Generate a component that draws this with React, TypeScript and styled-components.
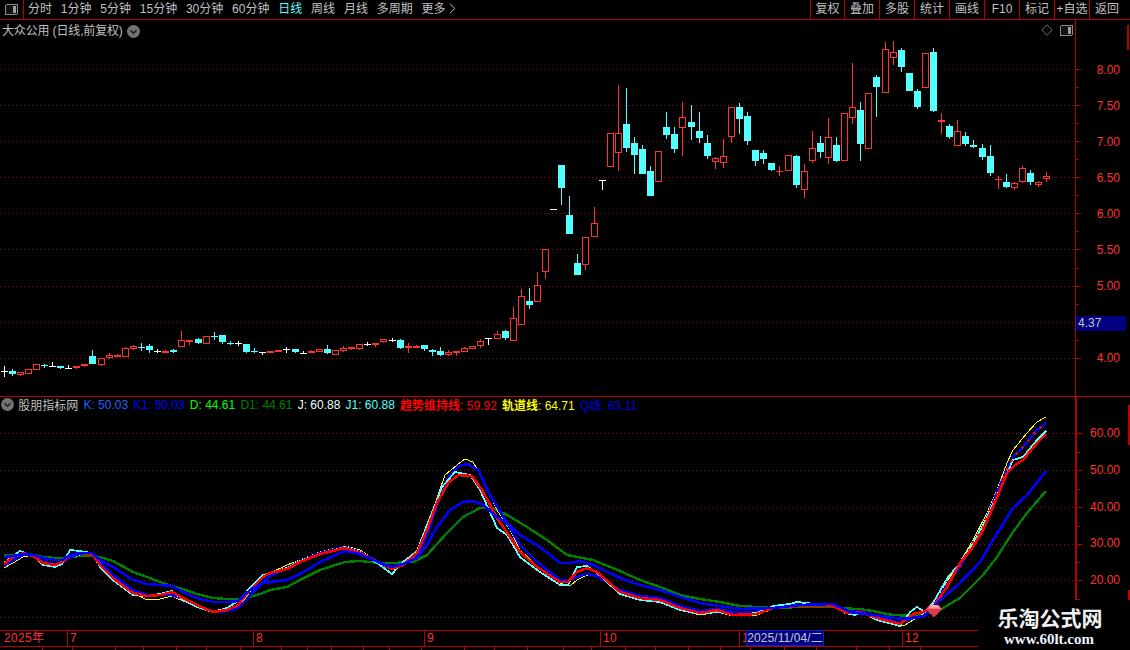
import React from "react";
import styled, { createGlobalStyle } from "styled-components";

const RED_LINE = "#b80000";
const UI_FONT = `"Liberation Sans", "Noto Sans CJK SC", sans-serif`;

const Global = createGlobalStyle`
  html, body { margin: 0; padding: 0; background: #000; overflow: hidden; }
  #root { width: 1130px; height: 650px; overflow: hidden; }
`;

const Page = styled.div`
  position: relative;
  width: 1130px;
  height: 650px;
  display: flex;
  flex-direction: column;
  background: #000;
  color: #c0c0c0;
  font: 12px ${UI_FONT};
  overflow: hidden;
`;

/* ---------- toolbar ---------- */
const Toolbar = styled.div`
  flex: none;
  height: 19px;
  display: flex;
  align-items: stretch;
  border-bottom: 1px solid ${RED_LINE};
`;
const PanelButton = styled.div`
  width: 18px;
  border-right: 1px solid ${RED_LINE};
  display: flex;
  align-items: center;
  padding-left: 5px;
  margin-right: 4px;
`;
const Periods = styled.div`
  flex: 1;
  display: flex;
  align-items: center;
  gap: 8.8px;
`;
const Period = styled.span<{ $active?: boolean }>`
  color: ${(p) => (p.$active ? "#54ffff" : "#c0c0c0")};
  white-space: nowrap;
  line-height: 19px;
`;
const ToolButton = styled.div<{ $w: number }>`
  width: ${(p) => p.$w}px;
  box-sizing: border-box;
  border-left: 1px solid ${RED_LINE};
  padding-right: ${(p) => (p.$w > 35 ? 6 : 0)}px;
  text-align: center;
  line-height: 18px;
  white-space: nowrap;
`;

/* ---------- panes ---------- */
const MainPane = styled.div`
  flex: none;
  height: 377px;
  box-sizing: border-box;
  display: flex;
  border-bottom: 1px solid ${RED_LINE};
`;
const IndicatorPane = styled.div`
  flex: none;
  height: 233px;
  display: flex;
`;
const Surface = styled.div`
  position: relative;
  width: 1075px;
  flex: none;
  svg.plot { display: block; }
`;
const PriceAxis = styled.div<{ $heavy?: boolean; $top: number; $row: number }>`
  position: relative;
  flex: 1;
  border-left: ${(p) => (p.$heavy ? 2 : 1)}px solid ${RED_LINE};
  padding-top: ${(p) => p.$top}px;
  box-sizing: border-box;
  color: #ff3232;
  --row: ${(p) => p.$row}px;
  svg { position: absolute; left: 0; top: 0; }
`;
const AxisLabel = styled.div`
  height: var(--row);
  line-height: var(--row);
  text-align: right;
  padding-right: 10px;
  position: relative;
`;
const PriceBadge = styled.div`
  position: absolute;
  left: 0;
  top: 296px;
  width: 50px;
  height: 15px;
  padding-left: 2px;
  box-sizing: border-box;
  line-height: 15px;
  background: #000080;
  color: #c8c8c8;
`;

/* ---------- overlays on panes ---------- */
const Title = styled.div`
  position: absolute;
  left: 2px;
  top: 2px;
  display: flex;
  align-items: center;
  gap: 4px;
  line-height: 18px;
  letter-spacing: -0.15px;
  color: #c0c0c0;
`;
const CornerTools = styled.div`
  position: absolute;
  right: 2px;
  top: 4px;
  display: flex;
  align-items: center;
  gap: 7px;
`;
const Legend = styled.div`
  position: absolute;
  left: 1px;
  top: 0;
  display: flex;
  align-items: center;
  height: 15px;
  white-space: nowrap;
  gap: 5.2px;
`;
const LegendName = styled.span`
  color: #c0c0c0;
  margin-left: -1px;
`;
const LegendValue = styled.span<{ $color: string }>`
  color: ${(p) => p.$color};
`;
const LegendCjk = styled.span<{ $bold?: boolean }>`
  font-weight: ${(p) => (p.$bold ? 700 : 400)};
`;

/* ---------- time axis ---------- */
const TimeAxis = styled.div`
  position: relative;
  flex: none;
  height: 17px;
  box-sizing: border-box;
  border-top: 1px solid ${RED_LINE};
  border-bottom: 1px solid ${RED_LINE};
  color: #ff3232;
  display: flex;
`;
const TimeCell = styled.div<{ $w: number; $pad: number }>`
  flex: none;
  width: ${(p) => p.$w}px;
  border-right: 1px solid ${RED_LINE};
  box-sizing: border-box;
  line-height: 15px;
  padding-left: ${(p) => p.$pad}px;
  letter-spacing: 0.3px;
  overflow: hidden;
  white-space: nowrap;
  &:last-child { border-right: 0; }
`;
const DateTag = styled.div`
  position: absolute;
  left: 746px;
  top: -1px;
  width: 78px;
  height: 16px;
  box-sizing: border-box;
  background: #000080;
  border: 1px solid #1020c0;
  color: #c8c8c8;
  line-height: 14px;
  text-align: center;
  white-space: nowrap;
  letter-spacing: 0.1px;
`;
const StatusStrip = styled.div`
  flex: none;
  height: 3px;
  display: flex;
  overflow: hidden;
`;
const StatusCell = styled.div<{ $w: number }>`
  flex: none;
  width: ${(p) => p.$w}px;
  box-sizing: border-box;
  border-right: 1px solid ${RED_LINE};
  height: 3px;
`;

/* ---------- watermark ---------- */
const Watermark = styled.div`
  position: absolute;
  left: 978px;
  top: 600px;
  width: 152px;
  height: 50px;
  background: #000;
  display: flex;
  flex-direction: column;
  align-items: center;
  padding-top: 4px;
  box-sizing: border-box;
`;
const WatermarkName = styled.div`
  color: #f0f0f0;
  font: 700 21px/26px "Noto Sans CJK SC", sans-serif;
  margin-left: -8px;
`;
const WatermarkUrl = styled.div`
  color: #eef2ff;
  font: 700 15px/15px "Liberation Serif", serif;
  margin-top: 2px;
  margin-left: -10px;
`;

/* ---------- small drawings ---------- */
const PanelIcon = () => (
  <svg width="13" height="11" viewBox="0 0 13 11" shapeRendering="crispEdges">
    <rect x="0.5" y="0.5" width="12" height="10" rx="1.5" fill="#111" stroke="#8a8a8a" />
    <rect x="8" y="2" width="3" height="7" fill="#a0a0a0" />
  </svg>
);
const Chevron = () => (
  <svg width="13" height="13" viewBox="0 0 13 13">
    <circle cx="6.5" cy="6.5" r="6.5" fill="#737373" />
    <path d="M3.5 5.2 L6.5 8.2 L9.5 5.2" fill="none" stroke="#1c1c1c" strokeWidth="1.4" />
  </svg>
);
const Diamond = () => (
  <svg width="12" height="12" viewBox="0 0 12 12">
    <path d="M6 .8 L11.2 6 L6 11.2 L.8 6 Z" fill="none" stroke="#6e6e6e" />
  </svg>
);
const MoreArrow = () => (
  <svg width="7" height="11" viewBox="0 0 7 11" style={{ marginLeft: 3, verticalAlign: "-1px" }}>
    <path d="M1 .8 L5.8 5.5 L1 10.2" fill="none" stroke="#c0c0c0" />
  </svg>
);

/* ---------- candle data: [x, wickTop, wickBottom, bodyTop, bodyBottom, kind]
   measured on 3x crops; kind r = hollow red, f = solid red, c = cyan, w = white */
type Kind = "r" | "f" | "c" | "w";
type Row = [number, number, number, number, number, Kind];

const groupA: Row[] = [
  [12,138,170,154,156,"w"],[37,148,170,153,161,"c"],[61,157,170,157,166,"r"],[85,148,163,148,163,"r"],
  [109,133,151,133,151,"r"],[133,131,143,136,138,"c"],[156,127,141,139,141,"w"],[180,139,147,139,144,"c"],
  [204,136,147,145,147,"w"],[229,137,146,137,143,"r"],[253,133,143,133,139,"r"],[277,91,132,108,132,"c"],
  [304,115,140,115,134,"r"],[328,100,118,106,115,"r"],[352,103,110,106,110,"f"],[376,82,110,85,110,"r"],
  [400,76,92,79,86,"r"],[424,70,93,81,83,"c"],[448,72,98,78,90,"c"],[472,88,99,93,95,"w"],
  [496,91,99,94,98,"f"],[520,87,99,90,96,"c"],[544,33,80,61,80,"r"],[568,61,75,61,65,"f"],
  [595,54,71,57,69,"c"],[619,49,71,49,71,"r"],[643,37,60,47,49,"c"],[667,45,71,45,66,"c"],
  [690,63,75,69,71,"c"],[714,63,78,70,72,"w"],[739,72,99,72,96,"c"],[762,84,99,93,95,"c"],
  [786,96,105,97,99,"w"],[811,94,98,94,98,"f"],[835,91,98,91,95,"f"],[858,81,98,88,90,"w"],
  [886,87,98,87,95,"c"],
];
const groupB: Row[] = [
  [9,153,162,159,161,"w"],[34,151,159,153,158,"f"],[58,148,155,148,155,"r"],[82,135,162,147,159,"c"],
  [106,151,164,151,164,"r"],[130,138,155,145,152,"r"],[154,142,152,142,146,"f"],[178,133,152,133,146,"r"],
  [202,126,138,131,133,"w"],[226,130,141,130,136,"r"],[250,118,129,118,125,"r"],[276,114,125,120,122,"w"],
  [301,117,148,120,144,"c"],[325,129,159,138,143,"f"],[349,135,143,139,143,"f"],[373,135,153,135,147,"c"],
  [397,147,168,151,155,"c"],[421,141,168,153,165,"c"],[445,150,167,157,164,"r"],[469,153,167,153,158,"f"],
  [493,141,155,144,155,"r"],[517,139,149,139,146,"r"],[541,117,144,123,137,"r"],[565,114,135,115,117,"w"],
  [592,93,117,103,117,"r"],[616,90,120,94,114,"c"],
];
const groupC: Row[] = [
  [40,681,762,714,783,"r"],[64,627,735,649,735,"r"],[88,624,687,663,675,"c"],[112,576,665,616,665,"r"],
  [136,508,597,508,575,"r"],[159,388,390,388,390,"w"],[184,255,375,255,323,"c"],[208,348,462,405,462,"c"],
  [232,522,585,549,585,"c"],[256,472,570,472,554,"r"],[283,381,470,430,470,"r"],[306,301,330,301,303,"w"],
  [331,160,260,160,260,"r"],[355,15,273,160,218,"r"],[379,24,216,132,204,"c"],[403,171,282,189,225,"c"],
  [427,195,282,207,282,"c"],[451,258,348,273,348,"c"],[475,214,305,214,305,"r"],[499,96,177,141,165,"c"],
  [523,141,219,162,207,"c"],[547,66,228,112,143,"r"],[574,75,180,126,141,"c"],[598,96,189,153,174,"c"],
  [622,165,237,189,228,"c"],[646,231,267,235,245,"r"],[670,177,264,229,248,"r"],[694,82,189,82,170,"r"],
  [718,69,162,81,117,"c"],[742,96,195,108,183,"c"],[766,210,258,210,243,"c"],[790,210,252,219,237,"c"],
  [814,249,273,249,270,"c"],[838,258,288,273,276,"f"],
];
const groupD: Row[] = [
  [25,346,395,346,392,"r"],[49,345,444,348,435,"c"],[73,372,474,393,449,"r"],[97,273,369,325,362,"r"],
  [121,288,354,309,336,"c"],[145,234,372,292,353,"r"],[169,291,366,315,363,"c"],[193,220,362,220,362,"r"],
  [217,69,252,202,233,"r"],[241,186,363,210,312,"c"],[265,160,326,160,326,"r"],[289,105,231,111,141,"c"],
  [316,6,158,28,158,"r"],[340,3,75,37,53,"r"],[364,24,96,30,81,"c"],[388,99,153,99,153,"c"],
  [412,147,207,153,201,"c"],[436,40,143,40,143,"r"],[460,24,216,36,213,"c"],[484,219,282,240,245,"f"],
  [508,252,297,258,291,"c"],[532,240,317,274,317,"r"],[556,276,318,288,312,"c"],[580,300,324,315,320,"c"],
  [607,312,360,324,351,"c"],[631,315,408,348,399,"c"],[655,408,447,417,419,"f"],[679,402,444,426,441,"c"],
  [703,426,450,430,443,"r"],[727,378,429,385,425,"r"],[751,390,435,399,426,"c"],[775,423,441,427,434,"r"],
  [799,396,426,408,418,"r"],
];

const colors: Record<Kind, string> = { r: "#ff3232", f: "#ff3232", c: "#54ffff", w: "#ffffff" };

const Candles = ({ rows, x0, y0 }: { rows: Row[]; x0: number; y0: number }) => (
  <>
    {rows.map(([x, wt, wb, bt, bb, k], i) => {
      const px = Math.floor(x0 + x / 3);
      const top = Math.round(y0 + bt / 3);
      const bot = Math.round(y0 + bb / 3);
      const c = colors[k];
      return (
        <g key={i}>
          <rect x={px} y={Math.round(y0 + wt / 3)} width={1} height={Math.max(1, Math.round((wb - wt) / 3))} fill={c} />
          {k === "r" ? (
            <rect x={px - 3 + 0.5} y={top + 0.5} width={6} height={Math.max(1, bot - top - 1)} fill="#000" stroke={c} />
          ) : (
            <rect x={px - 3} y={top} width={7} height={Math.max(1, bot - top)} fill={c} />
          )}
        </g>
      );
    })}
  </>
);

/* ---------- indicator curves, in page coordinates ---------- */
const Y = "4,568 13,563 23,557 33,555 43,562 55,566 62,564 70,558 80,555 92,553 100,565 113,578 133,593 147,600 160,599 172,596 183,601 197,606 213,612 227,611 238,608 250,592 263,577 270,573 287,565 300,560 320,552 345,546 360,550 380,563 392,570 403,566 417,552 427,530 437,498 445,475 457,465 465,459 473,462 482,478 497,510 510,530 520,550 537,566 560,583 570,586 577,580 587,575 597,575 620,593 640,600 660,602 680,610 700,615 717,612 733,616 757,615 773,609 797,605 833,605 847,613 860,613 877,618 903,626 920,616 933,607 948,580 960,562 973,540 987,513 997,490 1007,463 1013,450 1027,433 1037,422 1046,417";
const C = "4,563 13,556 20,551 33,556 43,565 55,567 62,564 70,550 80,551 92,553 100,567 113,580 133,595 147,596 160,594 172,591 183,600 197,607 213,612 227,608 238,601 250,588 263,575 272,572 287,568 300,561 320,554 345,547 360,552 380,565 392,574 403,562 417,551 427,525 437,500 442,487 455,472 470,475 480,490 497,528 507,535 520,557 537,570 560,585 568,585 577,567 587,566 597,573 620,594 640,600 660,602 680,610 700,614 717,612 735,615 757,613 773,606 790,604 797,602 815,604 833,604 845,613 855,615 862,612 877,620 900,626 910,612 917,607 925,612 933,603 948,577 960,563 973,543 983,525 995,500 1013,460 1023,457 1037,440 1046,431";
const R = "4,564 13,557 23,553 33,556 43,563 55,565 62,562 70,555 80,553 92,554 100,565 113,578 133,593 147,596 160,595 172,592 183,598 197,605 213,612 227,610 238,605 250,590 263,577 270,573 287,569 300,562 320,554 345,548 360,553 380,563 392,569 403,565 417,553 427,530 437,503 448,483 458,475 472,476 482,490 497,518 510,537 520,552 537,567 560,582 568,582 577,572 587,568 597,572 620,592 640,598 660,600 680,608 700,613 717,610 733,615 757,614 773,608 797,606 833,606 847,613 860,612 877,618 900,624 913,614 923,612 933,607 947,587 960,563 973,547 983,530 993,507 1007,473 1015,465 1023,460 1037,443 1046,434";
const Q = "4,566 13,560 23,555 33,555 43,562 55,564 62,563 70,557 80,554 92,554 100,562 113,575 133,590 147,595 160,595 172,595 183,599 197,606 213,612 227,611 238,608 250,596 263,582 270,576 287,568 300,561 320,553 345,547 360,552 380,563 392,567 403,564 417,555 427,535 437,505 448,478 458,466 468,464 478,470 490,495 510,528 520,545 537,562 560,580 568,581 577,577 587,574 597,576 620,590 640,596 660,598 680,606 700,611 717,609 733,612 757,612 773,607 797,605 833,605 847,611 860,611 877,617 900,623 913,618 923,616 933,607 948,583 960,567 973,543 983,527 998,490 1007,470 1013,457 1023,447 1037,430 1046,423";
const Qdots = "960,567 973,543 983,527 998,490 1007,470 1013,457 1023,447 1037,430 1046,423";
const D = "4,557 13,556 23,554 33,555 43,558 55,560 62,560 70,555 80,553 92,553 100,560 113,567 133,580 147,584 160,585 172,586 183,592 197,598 213,602 227,602 238,601 250,590 263,583 270,582 287,580 300,574 320,562 345,551 360,554 380,563 392,567 403,564 417,558 427,545 437,527 450,510 463,502 473,501 483,505 497,517 507,523 520,535 540,547 560,563 570,563 580,561 593,565 620,578 640,585 660,590 680,597 700,603 740,609 773,608 800,605 833,604 850,612 873,615 903,619 925,616 938,602 958,585 980,562 993,540 1013,508 1027,495 1046,471";
const G = "4,555 13,555 23,554 33,555 43,557 55,558 62,558 70,557 80,556 92,556 100,557 113,561 133,572 147,577 160,582 172,586 183,589 197,594 213,598 227,599 238,599 250,597 263,593 270,590 287,587 300,580 320,570 345,562 360,561 380,563 392,563 413,562 427,555 447,533 463,517 480,508 490,507 507,515 527,527 547,540 567,555 593,560 620,571 640,580 660,587 680,595 700,599 720,602 740,606 773,608 800,607 833,607 867,610 893,615 917,616 940,610 960,598 983,575 997,557 1013,532 1027,513 1046,491";

const mainGrid = [69, 105, 141, 177, 213, 249, 286, 322, 358];
const subGrid = [433, 470, 507, 544, 580, 617];

const Grid = ({ ys }: { ys: number[] }) => (
  <>
    {ys.map((y) => (
      <line key={y} x1="0" x2="1075" y1={y + 0.5} y2={y + 0.5} stroke="#8c1010" strokeDasharray="1 3" />
    ))}
  </>
);

const Curve = ({ d, c, w, dash }: { d: string; c: string; w: number; dash?: string }) => (
  <polyline points={d} fill="none" stroke={c} strokeWidth={w} strokeDasharray={dash} strokeLinejoin="round" />
);

const Gem = () => (
  <g shapeRendering="auto">
    <path d="M926 609 L929.5 605 L938.5 605 L942 609 L934 617 Z" fill="#ff5a6a" />
    <path d="M926 609 L942 609 L934 617 Z" fill="#e03a48" />
    <path d="M930 605 L938 605 L940 608.5 L928 608.5 Z" fill="#ff8a94" />
    <path d="M931 607 Q934 604.5 937 607" fill="none" stroke="#ffd0d6" strokeWidth="1" />
  </g>
);

const AxisTicks = ({ h, major, minor, top, rails }: { h: number; major: number[]; minor: number[]; top: number; rails: [number, number][] }) => (
  <svg width="55" height={h} shapeRendering="crispEdges">
    {major.map((y) => (
      <rect key={y} x="0" y={y - top} width="5" height="1" fill={RED_LINE} />
    ))}
    {minor.map((y) => (
      <rect key={y} x="0" y={y - top} width="3" height="1" fill={RED_LINE} />
    ))}
    {rails.map(([a, b]) => (
      <rect key={a} x="51" y={a - top} width="2" height={b - a} fill={RED_LINE} />
    ))}
  </svg>
);

const between = (ys: number[]) =>
  ys.slice(0, -1).map((y, i) => Math.round((y + ys[i + 1]) / 2));

const periods = ["分时", "1分钟", "5分钟", "15分钟", "30分钟", "60分钟", "日线", "周线", "月线", "多周期"];
const tools = ["复权", "叠加", "多股", "统计", "画线", "F10", "标记", "+自选", "返回"];
const prices = ["8.00", "7.50", "7.00", "6.50", "6.00", "5.50", "5.00", "", "4.00"];
const subPrices = ["60.00", "50.00", "40.00", "30.00", "20.00"];
const months: [string, number, number][] = [["2025年", 68, 4], ["7", 186, 2], ["8", 171, 2], ["9", 176, 2], ["10", 139, 2], ["1", 163, 2], ["12", 76, 2]];
const statusWidths = [43, 30, 43, 28, 33, 30, 34, 41, 26, 24, 32, 26, 32, 43, 30, 33, 36, 28, 34, 30, 33, 32, 30, 34, 32, 40, 33, 31, 200];

export default function App() {
  return (
    <Page>
      <Global />
      <Toolbar>
        <PanelButton><PanelIcon /></PanelButton>
        <Periods>
          {periods.map((p) => (
            <Period key={p} $active={p === "日线"}>{p}</Period>
          ))}
          <Period>更多<MoreArrow /></Period>
        </Periods>
        {tools.map((t) => (
          <ToolButton key={t} $w={t === "返回" ? 41 : t === "复权" ? 34 : 35}>{t}</ToolButton>
        ))}
      </Toolbar>

      <MainPane>
        <Surface>
          <svg className="plot" width="1075" height="376" viewBox="0 20 1075 376" shapeRendering="crispEdges">
            <Grid ys={mainGrid} />
            <Candles rows={groupA} x0={0} y0={320} />
            <Candles rows={groupB} x0={300} y0={300} />
            <Candles rows={groupC} x0={500} y0={80} />
            <Candles rows={groupD} x0={780} y0={40} />
          </svg>
          <Title>大众公用 (日线,前复权)<Chevron /></Title>
          <CornerTools><Diamond /><PanelIcon /></CornerTools>
        </Surface>
        <PriceAxis $top={32} $row={36}>
          <AxisTicks h={376} top={20} major={mainGrid} minor={between(mainGrid)} rails={[[25, 50]]} />
          {prices.map((p, i) => (
            <AxisLabel key={i}>{p}</AxisLabel>
          ))}
          <PriceBadge>4.37</PriceBadge>
        </PriceAxis>
      </MainPane>

      <IndicatorPane>
        <Surface>
          <svg className="plot" width="1075" height="233" viewBox="0 397 1075 233" shapeRendering="crispEdges">
            <Grid ys={subGrid} />
            <Curve d={G} c="#008000" w={2.4} />
            <Curve d={Y} c="#ffff00" w={1} />
            <Curve d={Q} c="#0000ff" w={2.6} />
            <Curve d={C} c="#54ffff" w={1.8} />
            <Curve d={Qdots} c="#ff0000" w={2.4} dash="2 7" />
            <Curve d={R} c="#ff0000" w={2.6} />
            <Curve d={D} c="#0000ff" w={2.6} />
            <Gem />
          </svg>
          <Legend>
            <Chevron />
            <LegendName>股朋指标网</LegendName>
            <LegendValue $color="#2060ff">K: 50.03</LegendValue>
            <LegendValue $color="#0000ff">K1: 50.03</LegendValue>
            <LegendValue $color="#00ff00">D: 44.61</LegendValue>
            <LegendValue $color="#008000">D1: 44.61</LegendValue>
            <LegendValue $color="#e8ffff">J: 60.88</LegendValue>
            <LegendValue $color="#54ffff">J1: 60.88</LegendValue>
            <LegendValue $color="#ff0000"><LegendCjk $bold>趋势维持线</LegendCjk>: 59.92</LegendValue>
            <LegendValue $color="#ffff00"><LegendCjk $bold>轨道线</LegendCjk>: 64.71</LegendValue>
            <LegendValue $color="#0000e0">Q<LegendCjk>线</LegendCjk>: 63.11</LegendValue>
          </Legend>
        </Surface>
        <PriceAxis $heavy $top={18} $row={36.8}>
          <AxisTicks h={233} top={397} major={subGrid} minor={between(subGrid)} rails={[[405, 445], [590, 600]]} />
          {subPrices.map((p) => (
            <AxisLabel key={p}>{p}</AxisLabel>
          ))}
        </PriceAxis>
      </IndicatorPane>

      <TimeAxis>
        {months.map(([m, w, pad], i) => (
          <TimeCell key={i} $w={w} $pad={pad}>{m}</TimeCell>
        ))}
        <DateTag>2025/11/04/二</DateTag>
      </TimeAxis>
      <StatusStrip>
        {statusWidths.map((w, i) => (
          <StatusCell key={i} $w={w} />
        ))}
      </StatusStrip>

      <Watermark>
        <WatermarkName>乐淘公式网</WatermarkName>
        <WatermarkUrl>www.60lt.com</WatermarkUrl>
      </Watermark>
    </Page>
  );
}
